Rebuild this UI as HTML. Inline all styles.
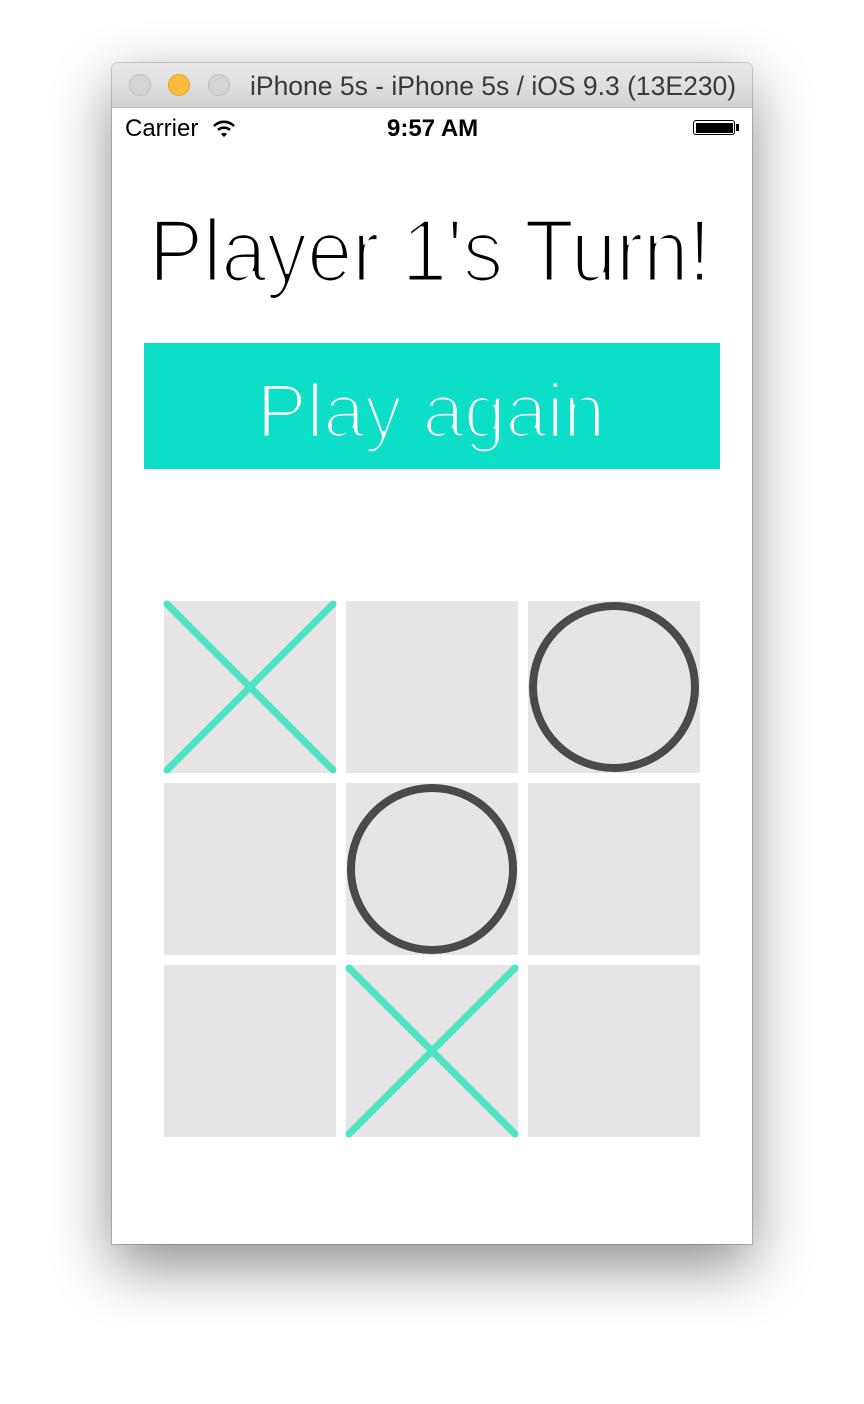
<!DOCTYPE html>
<html><head><meta charset="utf-8"><style>
html,body{margin:0;padding:0;background:#fff;width:864px;height:1404px;overflow:hidden;position:relative;font-family:"Liberation Sans",sans-serif}
.win{position:absolute;left:112px;top:63px;width:640px;height:1181px;background:#fff;border-radius:6px 6px 0 0;box-shadow:0 22px 60px rgba(0,0,0,.45),0 0 0 1px rgba(0,0,0,.18)}
.tb{position:absolute;left:0;top:0;width:640px;height:44px;border-radius:6px 6px 0 0;background:linear-gradient(#ebeaeb,#d3d2d3);border-bottom:1px solid #b8b8b8}
.dot{position:absolute;top:11px;width:22px;height:22px;border-radius:50%;box-sizing:border-box}
.cell{position:absolute;width:172px;height:172px;background:#e5e5e5}
</style></head><body>
<div class="win">
<div class="tb">
<div class="dot" style="left:17px;background:#d5d4d5;border:1px solid #bbb"></div>
<div class="dot" style="left:56px;background:#fdbc40;border:1px solid #dea236"></div>
<div class="dot" style="left:96px;background:#d5d4d5;border:1px solid #bbb"></div>
<div style="position:absolute;left:138px;top:8px;font-size:26.5px;color:#3a3a3a;white-space:nowrap">iPhone 5s - iPhone 5s / iOS 9.3 (13E230)</div>
</div>
<div style="position:absolute;left:13px;top:52px;font-size:24px;color:#000">Carrier</div>
<svg style="position:absolute;left:100px;top:56px" width="24" height="20" viewBox="0 0 24 20"><path d="M2 7 A14 14 0 0 1 22 7" fill="none" stroke="#000" stroke-width="2.6"/><path d="M6 11 A9 9 0 0 1 18 11" fill="none" stroke="#000" stroke-width="2.6"/><path d="M9 15 L12 18 L15 15 A4.5 4.5 0 0 0 9 15Z" fill="#000"/></svg>
<div style="position:absolute;left:275px;top:52px;font-size:24px;font-weight:bold;color:#000">9:57 AM</div>
<div style="position:absolute;left:581px;top:57px;width:42px;height:15px;border:1.5px solid #000;border-radius:3px;box-sizing:border-box;padding:1.5px"><div style="background:#000;width:100%;height:100%"></div></div>
<div style="position:absolute;left:624px;top:61px;width:3px;height:7px;background:#000"></div>
</div>
<svg style="position:absolute;left:0;top:0" width="864" height="1404">
<defs><filter id="thin" x="-5%" y="-20%" width="110%" height="140%"><feMorphology operator="erode" radius="1.4"/></filter>
<filter id="thin2" x="-5%" y="-20%" width="110%" height="140%"><feMorphology operator="erode" radius="1.3"/></filter></defs>
<text filter="url(#thin)" x="149" y="281" font-family="Liberation Sans, sans-serif" font-size="88" textLength="562" lengthAdjust="spacingAndGlyphs" fill="#000">Player 1's Turn!</text>
<rect x="144" y="343" width="576" height="126" fill="#0cdec8"/>
<text filter="url(#thin2)" x="257" y="437" font-family="Liberation Sans, sans-serif" font-size="76" textLength="348" lengthAdjust="spacingAndGlyphs" fill="#fff">Play again</text>
</svg>
<div class="cell" style="left:164px;top:601px"></div>
<div class="cell" style="left:346px;top:601px"></div>
<div class="cell" style="left:528px;top:601px"></div>
<div class="cell" style="left:164px;top:783px"></div>
<div class="cell" style="left:346px;top:783px"></div>
<div class="cell" style="left:528px;top:783px"></div>
<div class="cell" style="left:164px;top:965px"></div>
<div class="cell" style="left:346px;top:965px"></div>
<div class="cell" style="left:528px;top:965px"></div>
<svg style="position:absolute;left:0;top:0" width="864" height="1404">
<g stroke="#50e3c2" stroke-width="7" stroke-linecap="round">
<line x1="167" y1="604" x2="333" y2="770"/><line x1="333" y1="604" x2="167" y2="770"/>
<line x1="349" y1="968" x2="515" y2="1134"/><line x1="515" y1="968" x2="349" y2="1134"/>
</g>
<g fill="none" stroke="#4a4a4a" stroke-width="8">
<circle cx="614" cy="687" r="81"/>
<circle cx="432" cy="869" r="81"/>
</g>
</svg>
</body></html>
